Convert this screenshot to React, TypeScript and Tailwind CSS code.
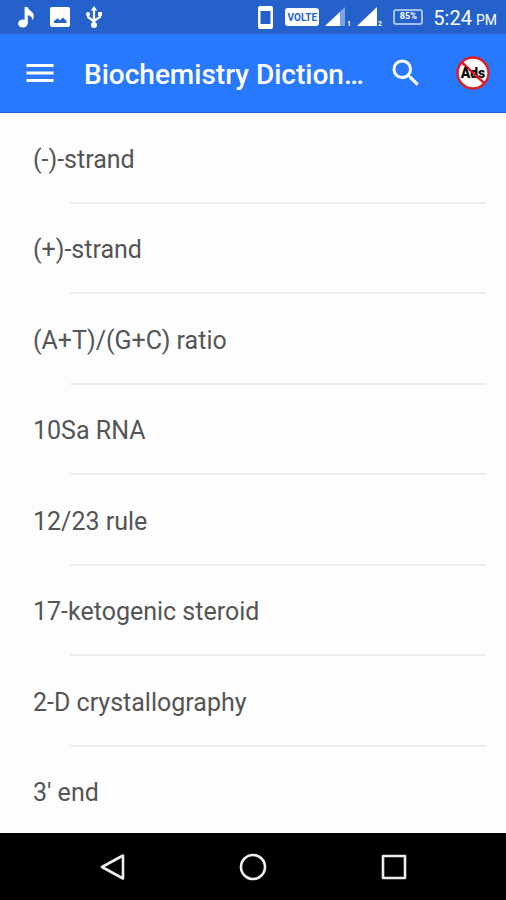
import type { ReactNode } from 'react'

const entries = [
  '(-)-strand',
  '(+)-strand',
  '(A+T)/(G+C) ratio',
  '10Sa RNA',
  '12/23 rule',
  '17-ketogenic steroid',
  '2-D crystallography',
  "3' end",
]

function StatusBar() {
  return (
    <div className="flex h-[34px] shrink-0 items-center justify-between bg-[#2461cb] pl-4 pr-[9px] text-white">
      <div className="flex items-center gap-[14px]">
        <svg width="20" height="22" viewBox="0 0 20 22" fill="currentColor" aria-hidden="true">
          <ellipse cx="6.8" cy="17.5" rx="4.8" ry="4" />
          <path d="M8.6 17.5V1h3c.7 2.2 2 3 3.800 4.400 2.400 1.900 3.200 4.800 1.200 8.800-.3-3-2-4.600-4.800-5v8.300z" />
        </svg>
        <svg width="20" height="20" viewBox="0 0 20 20" fill="currentColor" aria-hidden="true">
          <path
            fillRule="evenodd"
            d="M2 0h16a2 2 0 0 1 2 2v16a2 2 0 0 1-2 2H2a2 2 0 0 1-2-2V2a2 2 0 0 1 2-2zm2 16h12.5v-2l-3.7-3.5-2.8 3-2.3-2.2L4 14z"
          />
        </svg>
        <svg width="20" height="24" viewBox="0 0 20 24" fill="none" stroke="currentColor" strokeWidth="2.2" aria-hidden="true">
          <path d="M10 4v16M4 9v3l6 4.5M16 9v3l-6 4" />
          <path d="M10 1l3.2 4.5H6.8z" fill="currentColor" stroke="none" />
          <circle cx="10" cy="20" r="3" fill="currentColor" stroke="none" />
          <circle cx="4" cy="9" r="2.1" fill="currentColor" stroke="none" />
          <path d="M14 7h4v4h-4z" fill="currentColor" stroke="none" />
        </svg>
      </div>
      <div className="flex items-center">
        <svg width="15" height="23" viewBox="0 0 15 23" aria-hidden="true">
          <path
            fill="currentColor"
            fillRule="evenodd"
            d="M2 0h11a2 2 0 0 1 2 2v19a2 2 0 0 1-2 2H2a2 2 0 0 1-2-2V2a2 2 0 0 1 2-2zm.5 5v13h10V5z"
          />
        </svg>
        <span className="ml-3 flex h-[18px] w-[34px] items-center justify-center rounded-[3px] bg-white text-[10px] font-bold text-[#2461cb]">
          VOLTE
        </span>
        <svg className="ml-[6px]" width="26" height="20" viewBox="0 0 26 20" aria-hidden="true">
          <path d="M20 0v19H0z" fill="#7ea3e4" />
          <path d="M15 5v14H0z" fill="currentColor" />
          <text x="22" y="19" fill="currentColor" fontSize="7" fontWeight="700">1</text>
        </svg>
        <svg className="ml-[6px]" width="26" height="20" viewBox="0 0 26 20" aria-hidden="true">
          <path d="M20 0v19H0z" fill="currentColor" />
          <text x="21" y="19" fill="currentColor" fontSize="7" fontWeight="700">2</text>
        </svg>
        <span className="ml-[10px] flex h-4 w-[30px] items-center justify-center rounded-[3px] border-2 border-[#a5bfee] text-[9px] font-bold">
          85%
        </span>
        <span className="ml-[10px] flex items-baseline gap-1 pt-1 text-[20px] leading-6">
          5:24 <span className="text-[14px]">PM</span>
        </span>
      </div>
    </div>
  )
}

function NoAdsIcon() {
  return (
    <svg width="34" height="34" viewBox="0 0 34 34" aria-hidden="true">
      <circle cx="17" cy="17" r="15.5" fill="#fff" stroke="#e01b22" strokeWidth="2.4" />
      <path d="M6 6.5l22 20.5" stroke="#e01b22" strokeWidth="2.4" />
      <text x="17" y="21.5" textAnchor="middle" fontSize="14" fontWeight="900" fill="#0a0a0a">
        Ads
      </text>
      <path d="M15 15l8 7.4" stroke="#e01b22" strokeWidth="2" />
    </svg>
  )
}

function AppBar() {
  return (
    <header className="flex h-[79px] shrink-0 items-center border-b border-[#1f62d6] bg-[#2979ff] pl-[22px] pr-4 text-white">
      <button type="button" aria-label="Menu">
        <svg width="36" height="36" viewBox="0 0 24 24" fill="currentColor" aria-hidden="true">
          <path d="M3 18h18v-2H3v2zm0-5h18v-2H3v2zm0-7v2h18V6H3z" />
        </svg>
      </button>
      <h1 className="ml-[26px] min-w-0 flex-1 truncate pt-1 text-[28px] leading-9 font-medium">
        Biochemistry Dictionary
      </h1>
      <button type="button" aria-label="Search" className="ml-4">
        <svg width="36" height="36" viewBox="0 0 24 24" fill="currentColor" aria-hidden="true">
          <path d="M15.5 14h-.79l-.28-.27A6.471 6.471 0 0 0 16 9.5 6.5 6.5 0 1 0 9.5 16c1.61 0 3.09-.59 4.23-1.57l.27.28v.79l5 4.99L20.49 19l-4.99-5zm-6 0C7.01 14 5 11.99 5 9.5S7.01 5 9.5 5 14 7.01 14 9.5 11.99 14 9.5 14z" />
        </svg>
      </button>
      <button type="button" aria-label="Remove ads" className="ml-8">
        <NoAdsIcon />
      </button>
    </header>
  )
}

function NavButton({ label, children }: { label: string; children: ReactNode }) {
  return (
    <button type="button" aria-label={label} className="flex h-full flex-1 items-center justify-center">
      <svg width="28" height="28" viewBox="0 0 28 28" fill="none" stroke="currentColor" strokeWidth="2.6" strokeLinejoin="round" aria-hidden="true">
        {children}
      </svg>
    </button>
  )
}

export default function App() {
  return (
    <div className="flex h-screen flex-col bg-[#fdfdfd] font-[Roboto,sans-serif]">
      <StatusBar />
      <AppBar />
      <main className="min-h-0 flex-1 overflow-y-auto [scrollbar-width:none]">
        <ul>
          {entries.map((entry) => (
            <li key={entry} className="flex flex-col odd:h-[91px] even:h-[90px]">
              <a href="#" className="flex flex-1 items-center px-[33px] pt-1 text-[25px] leading-8 text-[#555555]">
                {entry}
              </a>
              <div className="ml-[70px] mr-5 h-0.5 bg-[#ececec]" />
            </li>
          ))}
        </ul>
      </main>
      <nav className="flex h-[67px] shrink-0 items-center bg-black px-[42px] text-[#eeeeee]">
        <NavButton label="Back">
          <path d="M25 2.5v23L4 14z" />
        </NavButton>
        <NavButton label="Home">
          <circle cx="14" cy="14" r="12" />
        </NavButton>
        <NavButton label="Recent apps">
          <path d="M3 3h22v22H3z" />
        </NavButton>
      </nav>
    </div>
  )
}
